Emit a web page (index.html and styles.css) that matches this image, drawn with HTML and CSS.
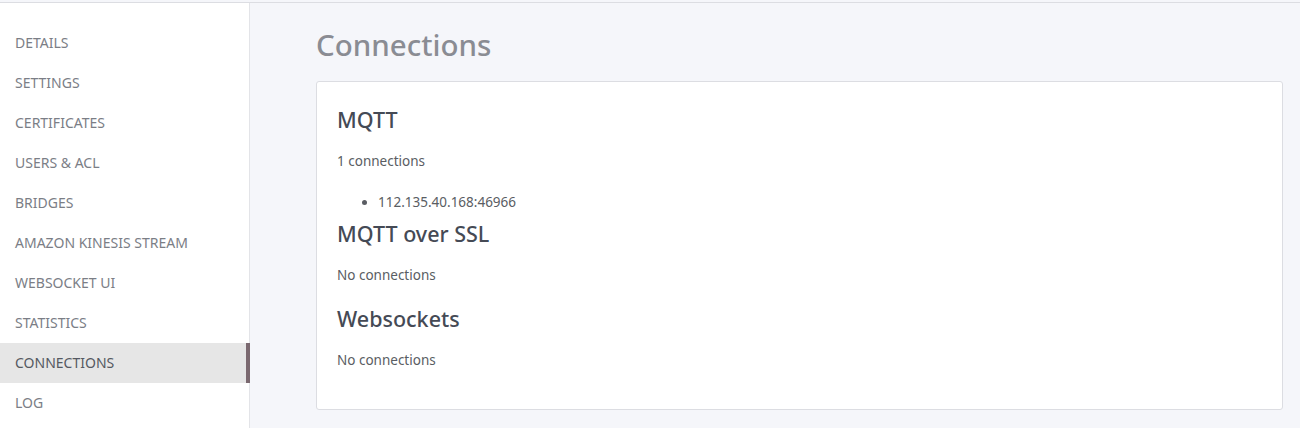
FILE: index.html
```html
<!DOCTYPE html>
<html>
<head>
<meta charset="utf-8">
<link rel="stylesheet" href="styles.css">
</head>
<body>
<div class="app">
  <nav class="sidebar">
    <a class="nav-item">DETAILS</a>
    <a class="nav-item">SETTINGS</a>
    <a class="nav-item">CERTIFICATES</a>
    <a class="nav-item">USERS &amp; ACL</a>
    <a class="nav-item">BRIDGES</a>
    <a class="nav-item">AMAZON KINESIS STREAM</a>
    <a class="nav-item">WEBSOCKET UI</a>
    <a class="nav-item">STATISTICS</a>
    <a class="nav-item active">CONNECTIONS</a>
    <a class="nav-item">LOG</a>
  </nav>
  <main class="main">
    <h1 class="page-title">Connections</h1>
    <section class="card">
      <h2 class="section-title">MQTT</h2>
      <p class="count">1 connections</p>
      <ul class="conn-list">
        <li>112.135.40.168:46966</li>
      </ul>
      <h2 class="section-title">MQTT over SSL</h2>
      <p class="count">No connections</p>
      <h2 class="section-title">Websockets</h2>
      <p class="count">No connections</p>
    </section>
  </main>
</div>
</body>
</html>
```
FILE: styles.css
```css
* { box-sizing: border-box; }
html, body { margin: 0; padding: 0; }
body {
  font-family: "Noto Sans", "Open Sans", sans-serif;
  background: #f5f6fa;
  height: 428px;
  overflow: hidden;
}
.app {
  display: flex;
  border-top: 1px solid #dcdde2;
  margin-top: 2px;
  height: 426px;
}
.sidebar {
  width: 250px;
  flex: none;
  background: #fff;
  border-right: 1px solid #e3e4e8;
  padding-top: 20px;
  display: flex;
  flex-direction: column;
}
.nav-item {
  display: block;
  height: 40px;
  line-height: 40px;
  padding-left: 15px;
  font-size: 14px;
  color: #7b7e86;
  text-decoration: none;
  white-space: nowrap;
}
.nav-item.active {
  background: #e6e6e6;
  color: #555961;
  border-right: 4px solid #7a686f;
  margin-right: -1px;
}
.main {
  flex: 1;
  padding: 0 17px 0 66px;
}
.page-title {
  margin: 22px 0 0 0;
  font-size: 29.5px;
  font-weight: 500;
  color: #8a8c93;
  line-height: 40px;
}
.card {
  margin-top: 16px;
  background: #fff;
  border: 1px solid #dcdde2;
  border-radius: 3px;
  padding: 22px 20px 0 20px;
  height: 329px;
}
.section-title {
  margin: 0;
  font-size: 21.5px;
  font-weight: 500;
  color: #454a55;
  line-height: 32px;
}
.count {
  margin: 16px 0 19px 0;
  font-size: 13.5px;
  color: #5a5d63;
  line-height: 18px;
}
.conn-list {
  margin: 23px 0 7px 0;
  padding-left: 41px;
  font-size: 13.5px;
  color: #5a5d63;
  line-height: 18px;
}
```
